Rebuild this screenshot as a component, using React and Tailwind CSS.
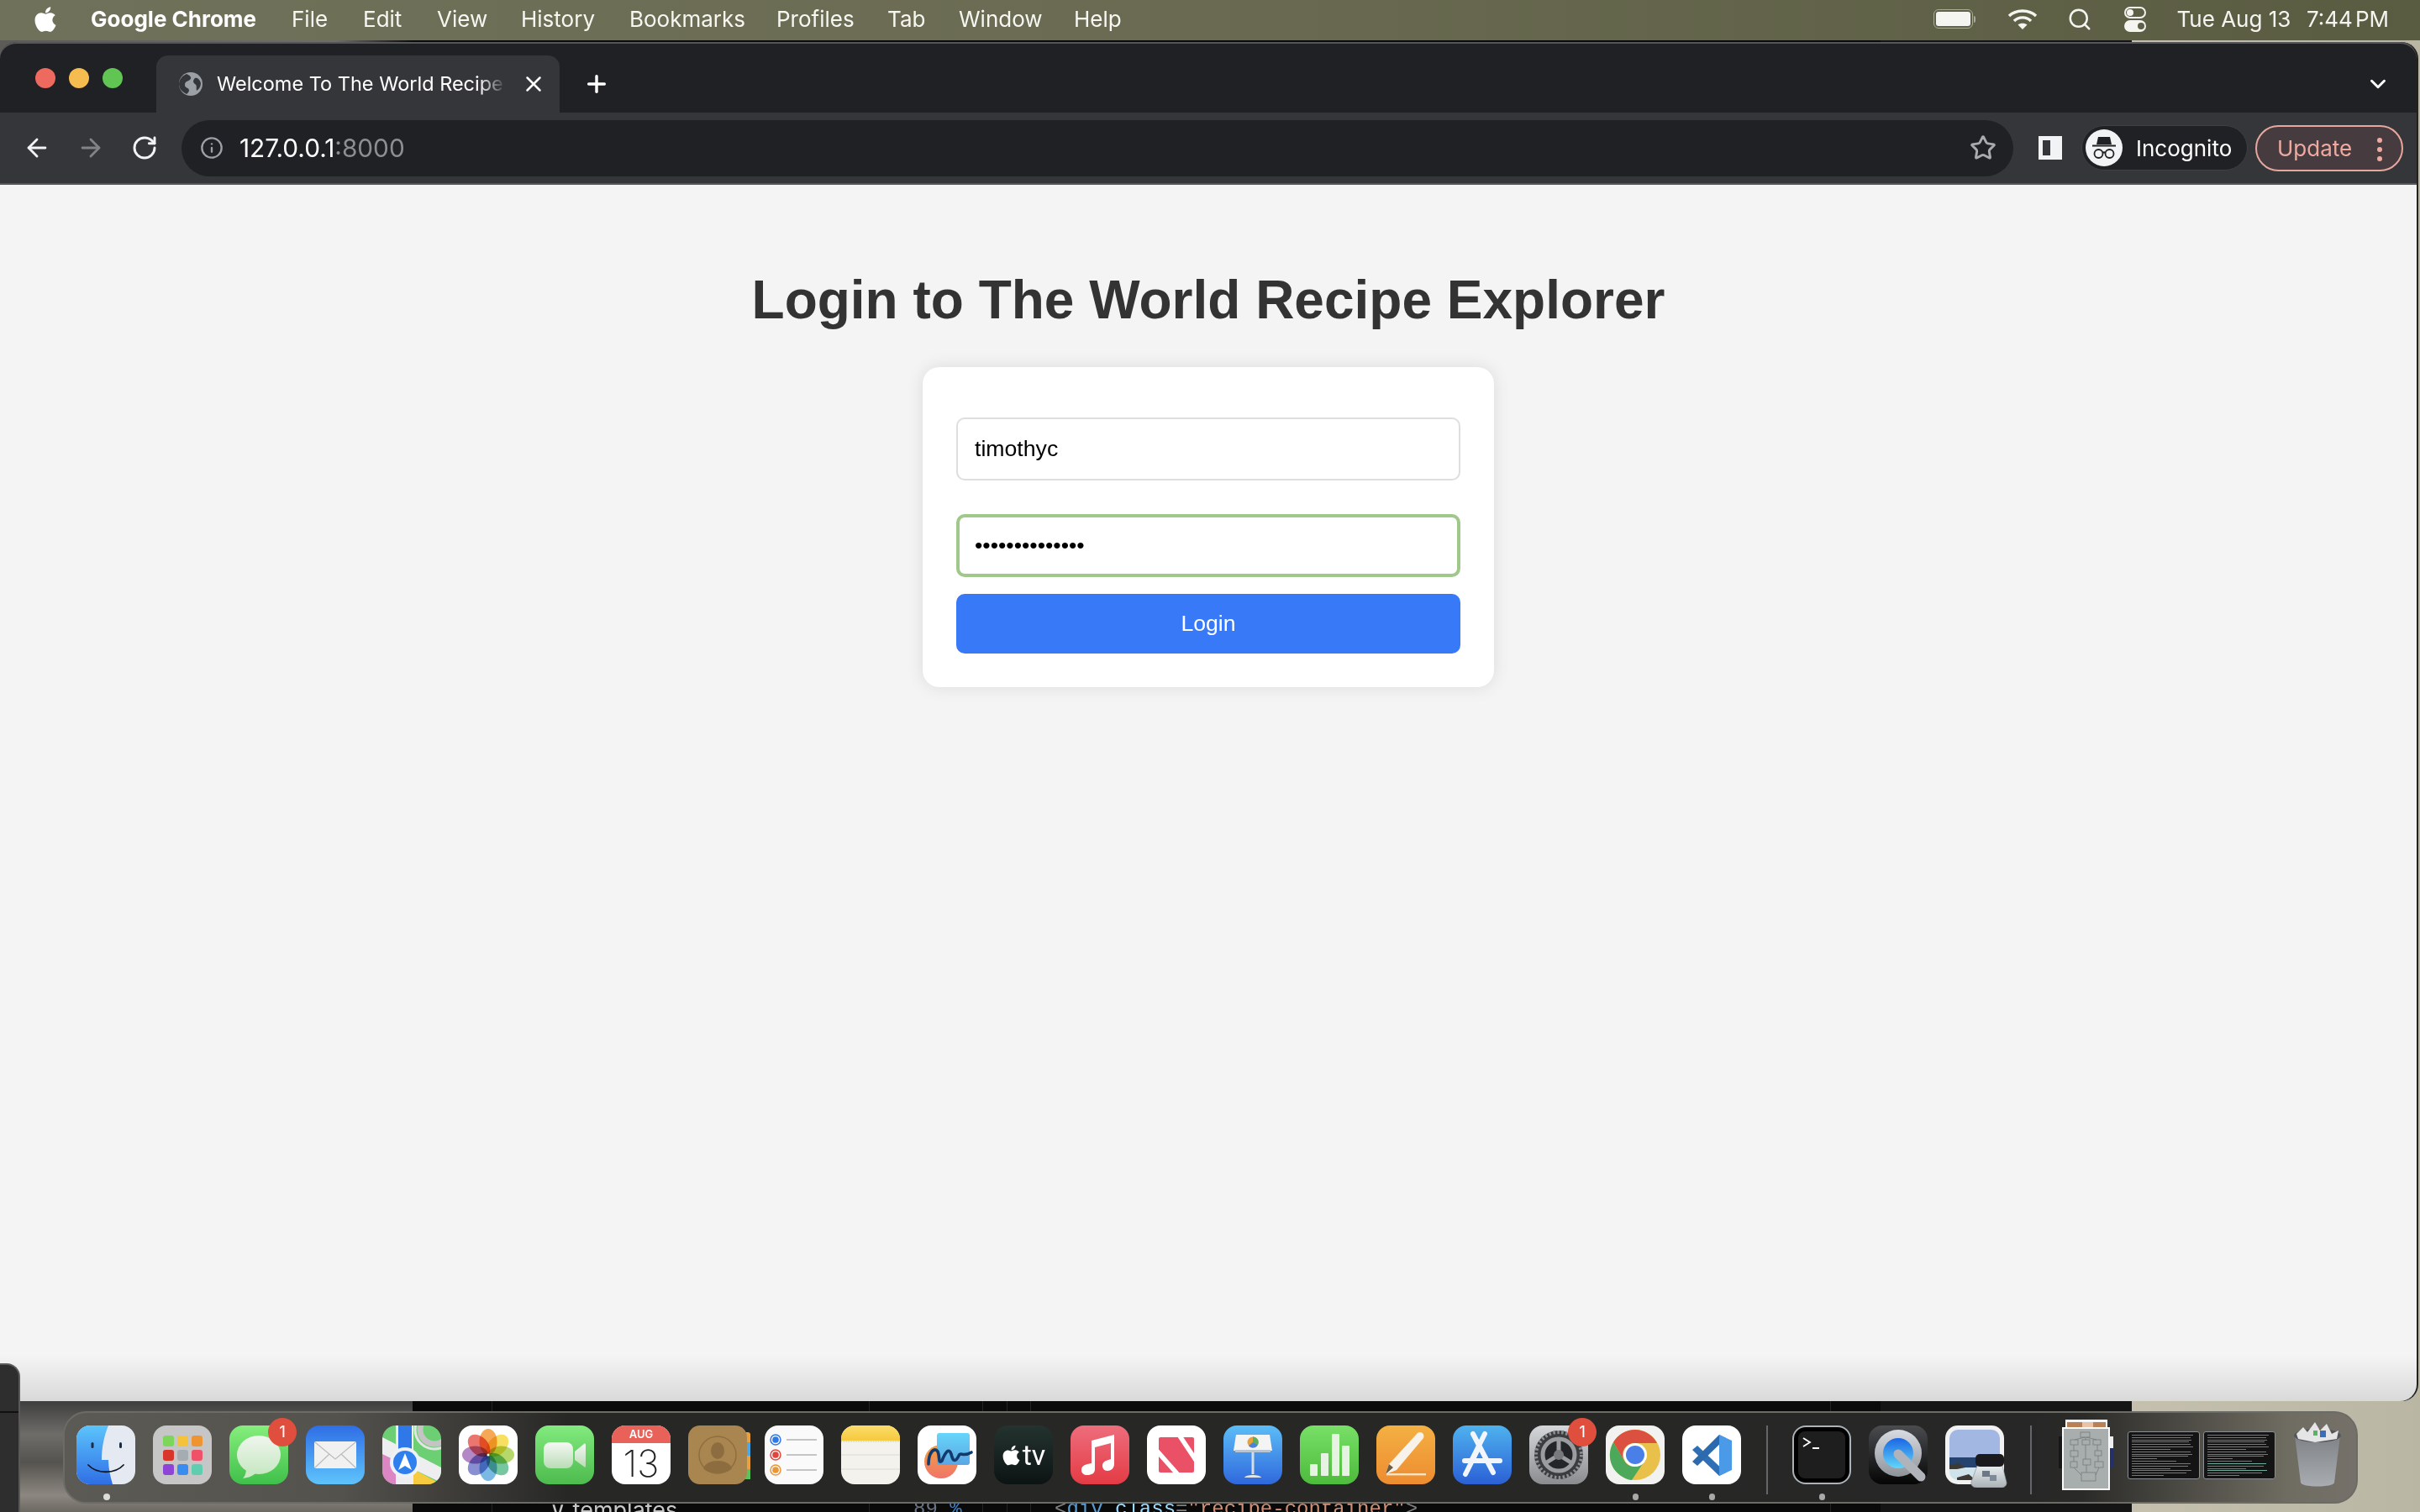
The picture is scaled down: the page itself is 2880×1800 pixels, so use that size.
import React from "react";
import { ArrowLeft, ArrowRight, ChevronDown, Info, Plus, RotateCw, Search, Star, X } from "lucide-react";
import { FaApple } from "react-icons/fa";

const menuItems = ["File", "Edit", "View", "History", "Bookmarks", "Profiles", "Tab", "Window", "Help"];

const Grad = ({ id, from, to }) => (
  <linearGradient id={id} x1="0" y1="0" x2="0" y2="1">
    <stop offset="0" stopColor={from} />
    <stop offset="1" stopColor={to} />
  </linearGradient>
);

const Tile = ({ children, w = 70, h = 70 }) => (
  <svg width={w} height={h} viewBox={`0 0 ${w} ${h}`} className="shrink-0 block">
    {children}
  </svg>
);

const Finder = () => (
  <Tile>
    <defs><Grad id="fin" from="#5cc4fb" to="#2f6fe6" /></defs>
    <rect width="70" height="70" rx="16" fill="#e4e9f2" />
    <path d="M16 0H38C33 12 30 26 30 41H38C38 50 40 60 43 70H16A16 16 0 0 1 0 54V16A16 16 0 0 1 16 0Z" fill="url(#fin)" />
    <rect x="17.5" y="20" width="3" height="7" rx="1.5" fill="#1c2a44" />
    <rect x="51" y="20" width="3" height="7" rx="1.5" fill="#1c2a44" />
    <path d="M14 47C24 58 46 58 56 47" stroke="#10192b" strokeWidth="1.8" fill="none" strokeLinecap="round" />
  </Tile>
);

const Launchpad = () => {
  const cells = ["#7bd65a", "#f5c23c", "#ef9433", "#d8352b", "#a5adb3", "#ef5268", "#8f44d8", "#3a8cf0", "#5fcdb0"];
  return (
    <Tile>
      <rect width="70" height="70" rx="16" fill="#c6c6c6" />
      {cells.map((c, i) => (
        <rect key={i} x={12 + (i % 3) * 17} y={12 + Math.floor(i / 3) * 17} width="13" height="13" rx="3" fill={c} />
      ))}
    </Tile>
  );
};

const Messages = () => (
  <Tile>
    <defs><Grad id="msg" from="#86ee7c" to="#3fc04a" /><Grad id="msgb" from="#f0f5ee" to="#c6e8c2" /></defs>
    <rect width="70" height="70" rx="16" fill="url(#msg)" />
    <ellipse cx="35" cy="35" rx="26" ry="23" fill="url(#msgb)" />
    <path d="M20 50C20 56 19 60 16 63C23 62 28 60 32 56Z" fill="#cbe9c7" />
  </Tile>
);

const Mail = () => (
  <Tile>
    <defs><Grad id="mail" from="#2f6ee6" to="#5ec4fb" /></defs>
    <rect width="70" height="70" rx="16" fill="url(#mail)" />
    <rect x="10" y="19" width="50" height="32" rx="2" fill="#f1f1f1" />
    <path d="M11 20L35 40L59 20M11 50L28 34M59 50L42 34" stroke="#bcbcbc" strokeWidth="1.2" fill="none" />
  </Tile>
);

const Maps = () => (
  <Tile>
    <defs><clipPath id="mapc"><rect width="70" height="70" rx="16" /></clipPath></defs>
    <g clipPath="url(#mapc)">
      <rect width="70" height="70" fill="#6ccf74" />
      <path d="M0 30L16 40V70H0Z" fill="#dd86c4" />
      <path d="M37 52L70 70H30Z" fill="#f6cb3f" />
      <path d="M0 14L70 50V68L0 34Z" fill="#eeeef0" />
      <rect x="16" y="0" width="21" height="70" fill="#eeeef0" />
      <rect x="19" y="0" width="16" height="40" fill="#2f78e8" />
      <circle cx="62" cy="5" r="17" fill="none" stroke="#c4c4c4" strokeWidth="7" />
      <circle cx="62" cy="5" r="23" fill="none" stroke="#e4e4e4" strokeWidth="3" />
      <circle cx="27" cy="44" r="18" fill="#eef1f6" />
      <circle cx="27" cy="44" r="14" fill="#2f80ee" />
      <path d="M27 33L35 53L27 48L19 53Z" fill="#fff" />
    </g>
  </Tile>
);

const Photos = () => {
  const petals = ["#f3952f", "#f5d83e", "#a6ce48", "#58b98a", "#5fa8de", "#6f78c8", "#a46cb8", "#e6584f"];
  return (
    <Tile>
      <rect width="70" height="70" rx="16" fill="#fff" />
      {petals.map((c, i) => (
        <ellipse key={c} cx="35" cy="19.5" rx="10.5" ry="15.5" fill={c} fillOpacity="0.82" className="mix-blend-multiply" transform={`rotate(${i * 45} 35 35)`} />
      ))}
      <circle cx="35" cy="35" r="1.5" fill="#fff" />
    </Tile>
  );
};

const Facetime = () => (
  <Tile>
    <defs><Grad id="ft" from="#82ea7e" to="#4dbb4e" /><Grad id="ftb" from="#f6f8f4" to="#b9dcb6" /></defs>
    <rect width="70" height="70" rx="16" fill="url(#ft)" />
    <rect x="10" y="20" width="35" height="31" rx="8" fill="url(#ftb)" />
    <path d="M47 31L58 22C59 21 60 22 60 23V48C60 50 59 50 58 49L47 41Z" fill="url(#ftb)" />
  </Tile>
);

const Calendar = () => (
  <div className="w-[70px] h-[70px] rounded-[16px] bg-white shrink-0 overflow-hidden flex flex-col items-center">
    <div className="w-full h-[21px] bg-[#e8625a] text-white text-[13px] font-semibold leading-[21px] text-center font-['Inter',sans-serif]">AUG</div>
    <div className="text-[#222] text-[44px] font-extralight leading-[48px] font-['Inter',sans-serif]">13</div>
  </div>
);

const Contacts = () => (
  <Tile w={74}>
    <rect x="60" y="8" width="14" height="56" rx="3" fill="#e9a13b" />
    <rect x="60" y="20" width="14" height="16" fill="#4aa8e8" />
    <rect x="60" y="52" width="14" height="12" fill="#5bc35e" />
    <rect width="70" height="70" rx="14" fill="#a98650" />
    <circle cx="35" cy="35" r="22" fill="none" stroke="#8f6f40" strokeWidth="1.5" />
    <ellipse cx="35" cy="30" rx="8" ry="10" fill="#8d6d3f" />
    <path d="M18 51C22 39 48 39 52 51C45 59 25 59 18 51Z" fill="#8d6d3f" />
  </Tile>
);

const Reminders = () => (
  <Tile>
    <rect width="70" height="70" rx="16" fill="#fafafa" />
    {[["#2f78e8", 17], ["#e1463c", 35], ["#ea9636", 53]].map(([c, y]) => (
      <g key={y}>
        <circle cx="13" cy={y} r="6" fill="none" stroke={c} strokeWidth="1.5" />
        <circle cx="13" cy={y} r="3.8" fill={c} />
        <rect x="26" y={y - 1} width="36" height="2" fill="#c5c5c5" />
      </g>
    ))}
  </Tile>
);

const Notes = () => (
  <Tile>
    <defs><clipPath id="notec"><rect width="70" height="70" rx="16" /></clipPath><Grad id="nt" from="#fbdc6a" to="#f6c93e" /></defs>
    <g clipPath="url(#notec)">
      <rect width="70" height="70" fill="#f4f2ec" />
      <rect width="70" height="18" fill="url(#nt)" />
      <path d="M0 19H70" stroke="#bdbbb2" strokeDasharray="1 1" />
      <path d="M0 35H70M0 52H70" stroke="#dcdad3" />
    </g>
  </Tile>
);

const Freeform = () => (
  <Tile>
    <defs><Grad id="ffc" from="#f2a23e" to="#f0746a" /><Grad id="ffr" from="#66d5fa" to="#5ba6e4" /></defs>
    <rect width="70" height="70" rx="16" fill="#fff" />
    <circle cx="28" cy="43" r="20" fill="url(#ffc)" />
    <rect x="23" y="9" width="39" height="38" rx="3" fill="url(#ffr)" />
    <path d="M13 46C13 32 20 25 24 31C27 38 24 46 29 42C33 32 37 26 40 34C42 43 45 44 49 36C51 31 54 38 64 32" stroke="#123a6b" strokeWidth="3.6" fill="none" strokeLinecap="round" />
  </Tile>
);

const AppleTv = () => (
  <div className="w-[70px] h-[70px] rounded-[16px] shrink-0 bg-[linear-gradient(#24332f,#0c1413)] flex items-center justify-center gap-[2px] text-white">
    <FaApple className="w-[23px] h-[27px]" />
    <span className="text-[34px] leading-none font-['Roboto',sans-serif]">tv</span>
  </div>
);

const Music = () => (
  <Tile>
    <defs><Grad id="mus" from="#ee6d7c" to="#e43b45" /></defs>
    <rect width="70" height="70" rx="16" fill="url(#mus)" />
    <path d="M25 18L52 11V46C52 51 48 54 44 54C40 54 38 51 38 48C38 44 41 42 45 41L48 40V21L29 26V52C29 57 25 59 20 59C16 59 13 57 13 53C13 49 16 47 20 46L25 45Z" fill="#fff" />
  </Tile>
);

const News = () => (
  <Tile>
    <defs><clipPath id="newsc"><rect x="14" y="14" width="42" height="42" rx="2" /></clipPath></defs>
    <rect width="70" height="70" rx="16" fill="#fff" />
    <g clipPath="url(#newsc)">
      <rect x="14" y="14" width="42" height="42" fill="#ea5166" />
      <path d="M36 8L60 44M8 26L40 62" stroke="#fff" strokeWidth="5.5" />
    </g>
  </Tile>
);

const Keynote = () => (
  <Tile>
    <defs><Grad id="key" from="#5cbdf7" to="#2f68dd" /></defs>
    <rect width="70" height="70" rx="16" fill="url(#key)" />
    <path d="M15 11H55L58 30H12Z" fill="#f4f4f4" />
    <rect x="14" y="29" width="42" height="3" fill="#b9c5d2" />
    <circle cx="35" cy="20" r="6.5" fill="#e9a13b" />
    <path d="M35 20V13.5A6.5 6.5 0 0 1 41 23Z" fill="#5bb05c" />
    <path d="M35 20L41 23A6.5 6.5 0 0 1 30 24Z" fill="#4b83d8" />
    <rect x="33.5" y="32" width="3" height="26" fill="#d7dde4" />
    <path d="M25 62C26 58 44 58 45 62Z" fill="#e2e6ea" />
  </Tile>
);

const Numbers = () => (
  <Tile>
    <defs><Grad id="num" from="#78df67" to="#4dbb3c" /></defs>
    <rect width="70" height="70" rx="16" fill="url(#num)" />
    {[[12, 46], [25, 33], [38, 10], [50, 24]].map(([x, y]) => (
      <rect key={x} x={x} y={y} width="9" height={60 - y} rx="1" fill="#e7f3e2" />
    ))}
  </Tile>
);

const Pages = () => (
  <Tile>
    <defs><Grad id="pg" from="#f4b043" to="#ed8c30" /></defs>
    <rect width="70" height="70" rx="16" fill="url(#pg)" />
    <path d="M11 58L15 46L49 9C53 6 58 10 56 15L24 53Z" fill="#f8f3ea" />
    <path d="M11 58L15 46L20 50Z" fill="#6d5b45" />
    <rect x="12" y="57" width="47" height="2.4" fill="#f8e1bd" />
  </Tile>
);

const AppStore = () => (
  <Tile>
    <defs><Grad id="as" from="#4eb2ee" to="#2b60d6" /></defs>
    <rect width="70" height="70" rx="16" fill="url(#as)" />
    <path d="M38 10L22 42M24 10L48 56M29 30L15 58" stroke="#f2f6fb" strokeWidth="6" strokeLinecap="round" fill="none" />
    <rect x="11" y="39" width="48" height="6" rx="3" fill="#f2f6fb" />
  </Tile>
);

const SystemPrefs = () => (
  <Tile>
    <defs><Grad id="sp" from="#d5d7da" to="#8a8c8f" /></defs>
    <rect width="70" height="70" rx="16" fill="url(#sp)" />
    <circle cx="35" cy="35" r="29" fill="#3b3c3f" />
    <circle cx="35" cy="35" r="27" fill="none" stroke="#8d8f92" strokeWidth="4" strokeDasharray="2.5 2.5" />
    <circle cx="35" cy="35" r="19" fill="#242528" stroke="#9a9c9f" strokeWidth="5" />
    <path d="M35 35V17M35 35L19 45M35 35L51 45" stroke="#9a9c9f" strokeWidth="5" />
    <circle cx="35" cy="35" r="6" fill="#77797c" />
  </Tile>
);

const Chrome = () => (
  <Tile>
    <rect width="70" height="70" rx="16" fill="#f2f2f0" />
    <circle cx="35" cy="35" r="30" fill="#e9c14a" />
    <path d="M35 5A30 30 0 0 0 9 20L22 42A14 14 0 0 1 35 21H61A30 30 0 0 0 35 5Z" fill="#dc5040" />
    <path d="M9 20A30 30 0 0 0 31 65L45 44A14 14 0 0 1 22 42Z" fill="#4ca85a" />
    <circle cx="35" cy="35" r="14" fill="#fff" />
    <circle cx="35" cy="35" r="11" fill="#4a7fe8" />
  </Tile>
);

const VsCode = () => (
  <Tile>
    <rect width="70" height="70" rx="16" fill="#fff" />
    <path d="M12 29L18 24L52 56L44 60Z" fill="#2f6fb6" />
    <path d="M12 43L18 48L52 15L44 11Z" fill="#2c69ad" />
    <path d="M44 11L59 18V53L44 60Z" fill="#4a9ae8" />
  </Tile>
);

const Terminal = () => (
  <Tile>
    <rect x="1" y="1" width="68" height="68" rx="15" fill="#000" stroke="#a9b3b8" strokeWidth="2" />
    <rect x="7" y="7" width="56" height="56" rx="8" fill="#1e1e1e" />
    <path d="M13 15L21 20L13 25" stroke="#fff" strokeWidth="1.8" fill="none" />
    <rect x="24" y="26" width="8" height="2" fill="#fff" />
  </Tile>
);

const QuickTime = () => (
  <Tile>
    <defs><Grad id="qt" from="#4b4c50" to="#050505" /><Grad id="qtb" from="#1b66e4" to="#62d6f8" /><Grad id="qts" from="#d8dce2" to="#8e9299" /></defs>
    <rect width="70" height="70" rx="16" fill="url(#qt)" />
    <circle cx="35" cy="33" r="28" fill="url(#qts)" />
    <circle cx="35" cy="33" r="18" fill="url(#qtb)" />
    <path d="M35 34L62 61" stroke="#b0b4ba" strokeWidth="11" strokeLinecap="round" />
  </Tile>
);

const Preview = () => (
  <Tile w={74} h={74}>
    <defs>
      <clipPath id="prevc"><rect x="5" y="5" width="60" height="60" rx="10" /></clipPath>
      <Grad id="prevg" from="#e8eef0" to="#a9b2b6" />
    </defs>
    <rect width="70" height="70" rx="15" fill="#f2f2f2" />
    <g clipPath="url(#prevc)">
      <rect x="5" y="5" width="60" height="34" fill="#a3b7e3" />
      <rect x="5" y="38" width="60" height="13" fill="#24436f" />
      <rect x="5" y="50" width="60" height="15" fill="#cfe3ea" />
      <path d="M5 47L16 45L24 50L14 52H5Z" fill="#3d3a36" />
      <path d="M14 62L28 58L36 65H14Z" fill="#3d3a36" />
    </g>
    <path d="M38 48H68L73 68C73 72 70 74 66 74H38C33 74 30 71 31 67Z" fill="url(#prevg)" stroke="#8f9397" strokeWidth="0.7" />
    <rect x="36" y="34" width="34" height="15" rx="5" fill="#1b1b1d" />
    <rect x="44" y="54" width="9" height="7" fill="#6c7888" />
    <rect x="53" y="59" width="8" height="7" fill="#7f8a98" />
  </Tile>
);

const FlowDoc = () => (
  <Tile w={65} h={84}>
    <rect x="0" y="20" width="6" height="38" fill="#171717" />
    <rect x="60" y="20" width="5" height="38" fill="#24306a" />
    <rect x="60" y="20" width="5" height="14" fill="#eee" />
    <rect x="8" y="0" width="50" height="10" fill="#f5f5f5" />
    <rect x="10" y="3" width="46" height="7" fill="#b98056" />
    <rect x="28" y="3" width="13" height="7" fill="#e8c3a8" />
    <rect x="4" y="9" width="57" height="75" fill="#fbfbfb" />
    <rect x="6" y="11" width="53" height="71" fill="#a8adad" />
    <g stroke="#6f7575" strokeWidth="0.7" fill="none">
      <rect x="26" y="15" width="11" height="6" />
      <rect x="14" y="24" width="9" height="6" />
      <rect x="28" y="24" width="9" height="6" />
      <rect x="41" y="24" width="9" height="6" />
      <rect x="14" y="37" width="9" height="7" />
      <rect x="43" y="37" width="8" height="6" />
      <rect x="14" y="50" width="8" height="7" />
      <rect x="29" y="47" width="9" height="7" />
      <rect x="43" y="50" width="10" height="7" />
      <rect x="27" y="63" width="17" height="10" />
      <path d="M31 21L19 24M32 21V24M33 21L45 24M18 30V37M32 30V47M46 30V37M18 44V50M47 43V50M18 57L27 66M33 54V63M48 57L44 66" />
    </g>
  </Tile>
);

const termRows = [96, 92, 94, 90, 92, 96, 60, 92, 95, 88, 40, 70, 92, 88, 60, 93, 85, 50];

const TermShot = ({ colored }) => (
  <div className="w-[86px] h-[57px] shrink-0 bg-[#141414] border border-[#8b8f93] rounded-[3px] px-[4px] py-[3px] flex flex-col gap-[2px] overflow-hidden">
    {termRows.map((w, i) => (
      <div key={i} className={colored && i > 10 && i % 3 == 0 ? "h-[1px] bg-[#6fae9e]" : "h-[1px] bg-[#777]"} style={{ width: `${w}%` }} />
    ))}
  </div>
);

const Trash = () => (
  <Tile w={66} h={80}>
    <defs><Grad id="tr" from="#7f8388" to="#a9adb1" /></defs>
    <path d="M6 18H60L53 74C52 80 14 80 13 74Z" fill="url(#tr)" />
    <ellipse cx="33" cy="18" rx="28" ry="8" fill="#53575c" />
    <path d="M8 16L16 8L21 14L30 2L36 12L44 4L50 16L58 12L56 22L30 26L10 22Z" fill="#e5e5e5" />
    <rect x="36" y="12" width="7" height="8" fill="#3a6fb8" />
    <rect x="28" y="12" width="5" height="6" fill="#59b365" />
  </Tile>
);

const WithBadge = ({ children, badge, dot, dotLight }) => (
  <div className="relative shrink-0">
    {children}
    {badge && (
      <span className="absolute -top-[9px] -right-[10px] w-[34px] h-[34px] rounded-full bg-[#e04e3e] text-white text-[19px] leading-[34px] text-center font-['Inter',sans-serif]">
        {badge}
      </span>
    )}
    {dot && <span className={dotLight ? "absolute left-[32px] top-[81px] w-[8px] h-[8px] rounded-full bg-[#dcdcd8]" : "absolute left-[32px] top-[81px] w-[7px] h-[8px] rounded-full bg-[#a9a9a9]"} />}
  </div>
);

const Dock = () => (
  <div className="relative h-[110px] w-[2731px] ml-[75px] mt-[12px] rounded-[28px] border-[2px] border-[#6c6c66] bg-[linear-gradient(to_right,#5c5a55,#54524d_12%,#272726_22%,#272727_86%,#2a2a28_88%,#6f6c61_97%,#75716a)] flex items-start pl-[14px] pt-[15px]">
    <div className="flex items-start gap-[21px]">
      <WithBadge dot dotLight><Finder /></WithBadge>
      <Launchpad />
      <WithBadge badge="1"><Messages /></WithBadge>
      <Mail />
      <Maps />
      <Photos />
      <Facetime />
      <Calendar />
      <div className="w-[70px] shrink-0"><Contacts /></div>
      <Reminders />
      <Notes />
      <Freeform />
      <AppleTv />
      <Music />
      <News />
      <Keynote />
      <Numbers />
      <Pages />
      <AppStore />
      <WithBadge badge="1"><SystemPrefs /></WithBadge>
      <WithBadge dot><Chrome /></WithBadge>
      <WithBadge dot><VsCode /></WithBadge>
    </div>
    <div className="w-[2px] h-[82px] bg-[#66666a] ml-[30px] mr-[29px] shrink-0" />
    <div className="flex items-start gap-[21px]">
      <WithBadge dot><Terminal /></WithBadge>
      <QuickTime />
      <div className="w-[70px] shrink-0"><Preview /></div>
    </div>
    <div className="w-[2px] h-[82px] bg-[#66666a] ml-[31px] mr-[32px] shrink-0" />
    <div className="-mt-[7px]"><FlowDoc /></div>
    <div className="flex gap-[4px] ml-[17px] mt-[7px]">
      <TermShot />
      <TermShot colored />
    </div>
    <div className="ml-[17px] -mt-[6px]"><Trash /></div>
  </div>
);

const Wifi = () => (
  <svg width="36" height="26" viewBox="0 0 36 26" fill="none" stroke="#f4f4f0" strokeWidth="3.4">
    <path d="M2 9C10 1 26 1 34 9" />
    <path d="M8 15C13 9.5 23 9.5 28 15" />
    <path d="M17.999 25L12.5 19.5C15 17 21 17 23.5 19.5Z" fill="#f4f4f0" stroke="none" />
  </svg>
);

const Battery = () => (
  <div className="flex items-center gap-[1px]">
    <div className="w-[47px] h-[23px] rounded-[6px] border-[1.5px] border-[#a9a99c] p-[2px]">
      <div className="w-full h-full rounded-[3px] bg-[#f4f4f0]" />
    </div>
    <div className="w-[2px] h-[8px] bg-[#a9a99c] rounded-r-full" />
  </div>
);

const ControlCenter = () => (
  <div className="flex flex-col gap-[2px]">
    <div className="w-[26px] h-[14px] rounded-full border-[2px] border-[#f4f4f0] flex items-center px-[1px]">
      <span className="w-[8px] h-[8px] rounded-full bg-[#f4f4f0]" />
    </div>
    <div className="w-[26px] h-[14px] rounded-full bg-[#f4f4f0] flex items-center justify-end px-[2px]">
      <span className="w-[8px] h-[8px] rounded-full bg-[#5f6048]" />
    </div>
  </div>
);

const MenuBar = () => (
  <div className="h-12 pb-[3px] shrink-0 flex items-center bg-[linear-gradient(to_right,#70715a,#6a6b52_45%,#5a5c42)] text-white font-['Inter',sans-serif] text-[26px]">
    <FaApple className="w-[30px] h-[34px] ml-[39px]" />
    <span className="ml-[39px] font-bold w-[200px]">Google Chrome</span>
    <div className="flex ml-[39px] text-[#f7f7f2]">
      {menuItems.map((item, i) => (
        <span key={item} className={["w-[85px]", "w-[88px]", "w-[100px]", "w-[129px]", "w-[175px]", "w-[132px]", "w-[85px]", "w-[137px]", ""][i]}>
          {item}
        </span>
      ))}
    </div>
    <div className="ml-auto flex items-center">
      <Battery />
      <div className="ml-[38px]"><Wifi /></div>
      <Search className="w-[30px] h-[30px] ml-[35px] text-[#f4f4f0]" strokeWidth={2} />
      <div className="ml-[38px]"><ControlCenter /></div>
      <span className="ml-[36px] mr-[37px] text-[26px] text-[#f4f4f0]"><span className="mr-[4px]">Tue Aug 13</span>&nbsp;&nbsp;7:44<span className="ml-[3px]">PM</span></span>
    </div>
  </div>
);

const Globe = () => (
  <svg width="30" height="30" viewBox="0 0 30 30" className="shrink-0">
    <circle cx="15" cy="15" r="14" fill="#9aa0a6" />
    <path d="M10 3C14 5 17 7 14 10C11 12 8 12 8 16C8 20 12 19 13 22C13 25 11 26 10 27C4 24 1 20 1 15C1 10 5 5 10 3Z" fill="#35363a" />
    <path d="M20 8C23 7 26 10 27 14C27 18 25 21 22 23C21 19 23 17 20 15C17 13 18 10 20 8Z" fill="#35363a" />
  </svg>
);

const TabStrip = () => (
  <div className="h-[84px] shrink-0 bg-[#202124] flex items-start rounded-t-[20px] border-t-[2px] border-[#55565a] font-['Inter',sans-serif]">
    <div className="flex gap-[16px] ml-[42px] mt-[29px] w-[144px]">
      <span className="w-[24px] h-[24px] rounded-full bg-[#ee6a5f]" />
      <span className="w-[24px] h-[24px] rounded-full bg-[#f5bd4f]" />
      <span className="w-[24px] h-[24px] rounded-full bg-[#61c554]" />
    </div>
    <div className="relative mt-[14px] w-[480px] h-[68px] bg-[#35363a] rounded-t-[14px] flex items-center pl-[26px] text-white text-[23.5px]">
      <Globe />
      <span className="ml-[16px] w-[345px] whitespace-nowrap">Welcome To The World Recipe</span>
      <div className="absolute left-[384px] top-0 h-full w-[32px] bg-[linear-gradient(to_right,transparent,#35363a)]" />
      <X className="w-[30px] h-[30px] ml-[17px] relative" strokeWidth={2} />
    </div>
    <Plus className="w-[32px] h-[32px] ml-[28px] mt-[32px] text-white" strokeWidth={2.6} />
    <ChevronDown className="w-[30px] h-[30px] ml-auto mr-[31px] mt-[33px] text-white" strokeWidth={2.4} />
  </div>
);

const Toolbar = () => (
  <div className="h-[84px] shrink-0 bg-[#35363a] flex items-center font-['Inter',sans-serif] relative">
    <ArrowLeft className="w-[34px] h-[34px] ml-[27px] text-[#f1f3f4]" strokeWidth={2} />
    <ArrowRight className="w-[34px] h-[34px] ml-[30px] text-[#808387]" strokeWidth={2} />
    <RotateCw className="w-[32px] h-[32px] ml-[31px] text-[#f1f3f4]" strokeWidth={2.2} />
    <div className="w-[2180px] h-[67px] ml-[28px] bg-[#202124] rounded-full flex items-center">
      <Info className="w-[28px] h-[28px] ml-[22px] text-[#9aa0a6]" strokeWidth={2} />
      <span className="ml-[19px] text-[29.8px] text-white">
        127.0.0.1<span className="text-[#8b8e92]">:8000</span>
      </span>
      <Star className="w-[32px] h-[32px] ml-auto mr-[20px] text-[#a9abae]" strokeWidth={2.2} />
    </div>
    <div className="w-[28px] h-[28px] ml-[30px] border-[5px] border-r-[14px] border-[#f1f3f4]" />
    <div className="w-[198px] h-[54px] ml-[23px] rounded-full bg-[#202124] border border-[#3f4044] flex items-center pl-[4px]">
      <div className="w-[44px] h-[44px] rounded-full bg-[#f1f3f4] flex items-center justify-center">
        <svg width="36" height="36" viewBox="0 0 36 36" fill="none" stroke="#202124" strokeWidth="1.8">
          <path d="M11 5H25L27 14H9Z" fill="#202124" stroke="none" />
          <path d="M4 15.5H32" strokeWidth="2" />
          <circle cx="11.5" cy="25" r="5" />
          <circle cx="24.5" cy="25" r="5" />
          <path d="M16.5 24C17.5 23 18.5 23 19.5 24" />
        </svg>
      </div>
      <span className="ml-[16px] text-[26px] text-white">Incognito</span>
    </div>
    <div className="w-[176px] h-[55px] ml-[9px] rounded-full bg-[#463c3f] border-[2px] border-[#e8a79e] flex items-center pl-[24px] text-[#eeaaa1] text-[26px] relative">
      <span>Update</span>
      <div className="absolute left-[143px] top-[13px] flex flex-col gap-[5px]">
        <span className="w-[6px] h-[6px] rounded-full bg-[#eeaaa1]" />
        <span className="w-[6px] h-[6px] rounded-full bg-[#eeaaa1]" />
        <span className="w-[6px] h-[6px] rounded-full bg-[#eeaaa1]" />
      </div>
    </div>
  </div>
);

const LoginPage = () => (
  <div className="flex-1 bg-[linear-gradient(to_bottom,#f4f4f4_calc(100%-55px),#d9d9d9_100%)] rounded-b-[20px] flex flex-col items-center font-['Liberation_Sans',Arial,sans-serif]">
    <h1 className="mt-[98px] text-[64px] leading-[78px] font-bold text-[#333] whitespace-nowrap">Login to The World Recipe Explorer</h1>
    <div className="mt-[41px] w-[680px] h-[381px] bg-white rounded-[20px] shadow-[0_0_20px_rgba(0,0,0,0.1)] px-[40px] pt-[60px] flex flex-col">
      <input readOnly value="timothyc" className="h-[75px] w-[600px] rounded-[10px] border-[2px] border-[#dedede] px-[20px] text-[26.67px] text-black outline-none" />
      <input readOnly type="password" value="timothyc12345!" className="mt-[40px] h-[75px] w-[600px] rounded-[10px] border-[4px] border-[#9fc88a] px-[18px] text-[26.67px] text-black outline-none" />
      <button className="mt-[20px] pb-[2px] h-[71px] w-[600px] rounded-[10px] bg-[#3779f6] text-white text-[26.67px]">Login</button>
    </div>
  </div>
);

// faint column lines of the editor window sitting behind the dock
const editorLines = [585, 1034, 1169, 1198, 1226, 2178];

export default function App() {
  return (
    <div className="relative w-[2880px] h-[1800px] overflow-hidden flex flex-col bg-[linear-gradient(to_right,#5d5b57,#716c66_400px,#0a0a0a_491px,#0a0a0a_2238px,#151515_2238px,#151515_2537px,#c4c0ad_2537px,#b9b6a4)]">
      <MenuBar />
      <div className="mt-[2px] h-[1618px] w-[2878px] shrink-0 flex flex-col rounded-t-[20px] rounded-b-[20px] border-r-[2px] border-[#222] bg-[#35363a]">
        <TabStrip />
        <Toolbar />
        <div className="h-[2px] shrink-0 bg-[#56575b]" />
        <LoginPage />
      </div>
      <div className="absolute left-0 top-[1668px] w-[491px] h-[132px] bg-[linear-gradient(to_bottom,#3e3e3e,#6e6d6a_30%,#55534f_55%,#8c8780_85%,#6c6862)]" />
      {editorLines.map((x) => (
        <div key={x} className="absolute top-[1668px] w-[1px] h-[132px] bg-[#242424]" style={{ left: x }} />
      ))}
      <div className="absolute left-[654px] top-[1778px] text-[27px] text-[#c8c8c8] font-['Inter',sans-serif] whitespace-nowrap">∨ templates</div>
      <div className="absolute left-[1087px] top-[1779px] text-[24px] text-[#6a7585] font-['Liberation_Mono',monospace] whitespace-nowrap">89 <span className="text-[#3f7fc4]">%</span></div>
      <div className="absolute left-[1255px] top-[1779px] text-[24px] font-['Liberation_Mono',monospace] whitespace-nowrap text-[#808080]">&lt;<span className="text-[#569cd6]">div</span> <span className="text-[#9cdcfe]">class</span>=<span className="text-[#ce9178]">"recipe-container"</span>&gt;</div>
      <Dock />
      <div className="absolute left-0 top-[1623px] w-[24px] h-[177px] bg-[#2e2e2e] rounded-tr-[16px] border-r-[2px] border-t-[2px] border-[#5a5a5a]">
        <div className="mt-[55px] h-[2px] bg-[#111]" />
      </div>
    </div>
  );
}
